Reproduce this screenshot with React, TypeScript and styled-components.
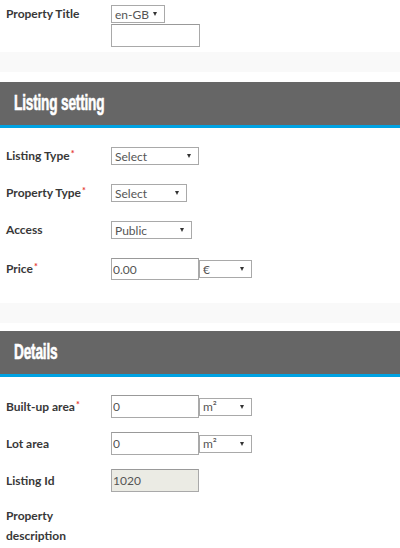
import React from "react";
import styled, { createGlobalStyle } from "styled-components";

const GlobalStyle = createGlobalStyle`
  html, body {
    margin: 0;
    padding: 0;
    background: #ffffff;
    font-family: Lato, "Open Sans", Arial, sans-serif;
    color: #333333;
  }
  * { box-sizing: border-box; }
`;

const Page = styled.div`
  width: 400px;
  display: flex;
  flex-direction: column;
`;

const TopSection = styled.div`
  padding: 5px 0 0 6px;
`;

const Band = styled.div<{ $top: number; $bottom: number }>`
  height: 20px;
  background: #f9f9f9;
  margin-top: ${(p) => p.$top}px;
  margin-bottom: ${(p) => p.$bottom}px;
`;

const SectionHeader = styled.div`
  height: 46px;
  background: #666666;
  border-bottom: 3px solid #00a2e2;
  padding-left: 14px;
  display: flex;
  align-items: center;
  overflow: hidden;
`;

const HeaderText = styled.h2`
  margin: 0;
  font-family: "Liberation Sans", Arial, sans-serif;
  font-weight: 700;
  font-size: 22px;
  line-height: 1;
  color: #ffffff;
  letter-spacing: -0.3px;
  -webkit-text-stroke: 0.6px #ffffff;
  transform: scaleX(0.62);
  transform-origin: left center;
  white-space: nowrap;
  padding-bottom: 2px;
`;

const Rows = styled.div<{ $gap: number; $top: number; $bottom: number }>`
  display: flex;
  flex-direction: column;
  gap: ${(p) => p.$gap}px;
  padding: ${(p) => p.$top}px 0 ${(p) => p.$bottom}px 6px;
`;

const FormRow = styled.div<{ $align?: string }>`
  display: grid;
  grid-template-columns: 105px auto;
  align-items: ${(p) => p.$align || "center"};
`;

const Label = styled.label`
  font-size: 12px;
  font-weight: 700;
  line-height: 18px;
  color: #383838;
  width: 80px;
`;

const WideLabel = styled(Label)`
  width: 100px;
`;

const DescLabel = styled(Label)`
  line-height: 20px;
`;

const Required = styled.span`
  color: #e53935;
  font-size: 9px;
  vertical-align: top;
  line-height: 14px;
  margin-left: 1px;
`;

const Controls = styled.div<{ $dir?: string }>`
  display: flex;
  flex-direction: ${(p) => p.$dir || "row"};
  align-items: ${(p) => (p.$dir === "column" ? "flex-start" : "center")};
  gap: ${(p) => (p.$dir === "column" ? "1px" : "0")};
`;

const SelectWrap = styled.div<{ $w: number }>`
  position: relative;
  width: ${(p) => p.$w}px;
  height: 18px;
  &::after {
    content: "";
    position: absolute;
    right: 8px;
    top: 7px;
    border-left: 2.5px solid transparent;
    border-right: 2.5px solid transparent;
    border-top: 4px solid #333333;
    pointer-events: none;
  }
`;

const Select = styled.select`
  display: block;
  appearance: none;
  -webkit-appearance: none;
  width: 100%;
  height: 100%;
  margin: 0;
  border: 1px solid #a9a9a9;
  border-radius: 0;
  background: #ffffff;
  padding: 0 0 0 3px;
  font-family: Lato, "Open Sans", Arial, sans-serif;
  font-size: 12px;
  color: #555555;
  outline: none;
`;

const TextInput = styled.input<{ $w: number; $h?: number }>`
  display: block;
  width: ${(p) => p.$w}px;
  height: ${(p) => p.$h || 23}px;
  margin: 0;
  border: 1px solid #a9a9a9;
  border-top-color: #999999;
  border-radius: 0;
  background: #ffffff;
  padding: 0 1px;
  font-family: Lato, "Open Sans", Arial, sans-serif;
  font-size: 12px;
  color: #555555;
  outline: none;
  &:disabled {
    background: #ebebe4;
    color: #555555;
  }
`;

type Opt = { w: number; value: string };

const Dropdown = ({ w, value }: Opt) => (
  <SelectWrap $w={w}>
    <Select defaultValue={value}>
      <option value={value}>{value}</option>
    </Select>
  </SelectWrap>
);

export default function App() {
  return (
    <Page>
      <GlobalStyle />
      <TopSection>
        <FormRow $align="start">
          <Label>Property Title</Label>
          <Controls $dir="column">
            <Dropdown w={54} value="en-GB" />
            <TextInput $w={89} />
          </Controls>
        </FormRow>
      </TopSection>
      <Band $top={5} $bottom={10} />
      <SectionHeader>
        <HeaderText>Listing setting</HeaderText>
      </SectionHeader>
      <Rows $gap={19} $top={19} $bottom={23}>
        <FormRow>
          <Label>
            Listing Type<Required>*</Required>
          </Label>
          <Controls>
            <Dropdown w={88} value="Select" />
          </Controls>
        </FormRow>
        <FormRow>
          <WideLabel>
            Property Type<Required>*</Required>
          </WideLabel>
          <Controls>
            <Dropdown w={76} value="Select" />
          </Controls>
        </FormRow>
        <FormRow>
          <Label>Access</Label>
          <Controls>
            <Dropdown w={81} value="Public" />
          </Controls>
        </FormRow>
        <FormRow>
          <Label>
            Price<Required>*</Required>
          </Label>
          <Controls>
            <TextInput $w={88} $h={22} defaultValue="0.00" />
            <Dropdown w={53} value="€" />
          </Controls>
        </FormRow>
      </Rows>
      <Band $top={0} $bottom={8} />
      <SectionHeader>
        <HeaderText>Details</HeaderText>
      </SectionHeader>
      <Rows $gap={14} $top={18} $bottom={0}>
        <FormRow>
          <WideLabel>
            Built-up area<Required>*</Required>
          </WideLabel>
          <Controls>
            <TextInput $w={88} defaultValue="0" />
            <Dropdown w={53} value="m²" />
          </Controls>
        </FormRow>
        <FormRow>
          <Label>Lot area</Label>
          <Controls>
            <TextInput $w={88} defaultValue="0" />
            <Dropdown w={53} value="m²" />
          </Controls>
        </FormRow>
        <FormRow>
          <Label>Listing Id</Label>
          <Controls>
            <TextInput $w={88} defaultValue="1020" disabled />
          </Controls>
        </FormRow>
        <FormRow $align="start">
          <DescLabel>Property description</DescLabel>
          <Controls />
        </FormRow>
      </Rows>
    </Page>
  );
}
